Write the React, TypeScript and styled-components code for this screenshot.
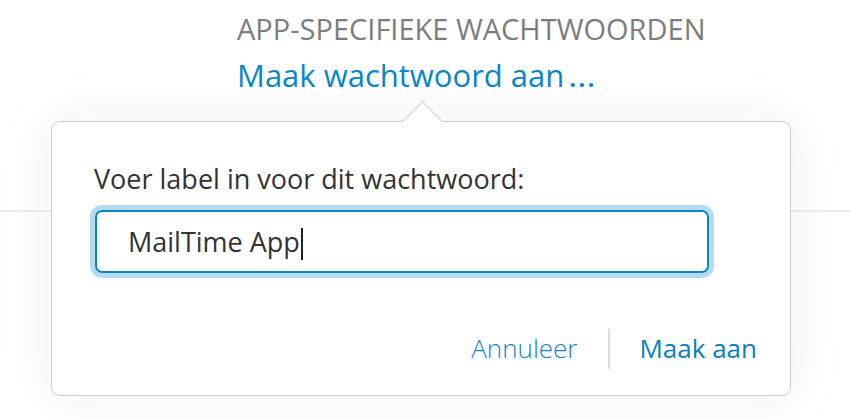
import React from "react";
import styled, { createGlobalStyle } from "styled-components";

const GlobalStyle = createGlobalStyle`
  body {
    margin: 0;
    background: #ffffff;
    font-family: "Open Sans", "Noto Sans", sans-serif;
  }
`;

const Page = styled.div`
  position: relative;
  width: 850px;
  height: 418px;
  overflow: hidden;
  background: #ffffff;
`;

const Header = styled.header`
  display: flex;
  flex-direction: column;
  align-items: flex-start;
  padding: 12px 0 0 237px;
`;

const Title = styled.h2`
  margin: 0;
  font-size: 29px;
  font-weight: 400;
  line-height: 34px;
  color: #7d7d7d;
`;

const CreateLink = styled.a`
  margin-top: 9px;
  font-size: 31px;
  line-height: 40px;
  color: #0a86cc;
  text-decoration: none;
`;

const Dots = styled.span`
  display: inline-block;
  margin-left: 4px;
  transform: scaleX(1.15);
  transform-origin: left center;
`;

const Section = styled.div`
  margin-top: 115px;
  border-top: 2px solid #ececec;
`;

const Popover = styled.div`
  position: absolute;
  left: 51px;
  top: 121px;
  width: 740px;
  height: 275px;
  box-sizing: border-box;
  background: #ffffff;
  border: 1.5px solid #cdcdcd;
  border-radius: 9px;
  box-shadow: 0 0 60px 12px rgba(0, 0, 0, 0.035);
  display: flex;
  flex-direction: column;
  padding: 40px 33px 0 42px;

  &::before {
    content: "";
    position: absolute;
    left: 356px;
    top: -15px;
    width: 28px;
    height: 28px;
    background: #ffffff;
    border-top: 1.5px solid #cdcdcd;
    border-left: 1.5px solid #cdcdcd;
    transform: rotate(45deg);
  }
`;

const Label = styled.label`
  font-size: 27px;
  line-height: 34px;
  color: #333333;
`;

const Field = styled.div`
  margin-top: 14px;
  margin-left: 1px;
  width: 614px;
  height: 63px;
  box-sizing: border-box;
  border: 2px solid #0a84c8;
  border-radius: 7px;
  box-shadow: 0 0 0 5px #b4dcf1;
  display: flex;
  align-items: center;
  padding-left: 31px;
  font-size: 27px;
  color: #333333;
`;

const Caret = styled.span`
  display: inline-block;
  width: 2px;
  height: 32px;
  margin: 4px 0 0 1px;
  background: #222222;
`;

const Actions = styled.div`
  margin-top: auto;
  margin-bottom: 26px;
  display: flex;
  justify-content: flex-end;
  align-items: center;
`;

const Action = styled.button<{ primary?: boolean }>`
  border: none;
  background: none;
  padding: 0;
  margin-top: -3px;
  font-family: inherit;
  font-size: 26px;
  font-weight: ${({ primary }) => (primary ? 400 : 300)};
  color: ${({ primary }) => (primary ? "#0a7fc4" : "#1585cb")};
  cursor: pointer;
`;

const Separator = styled.span`
  width: 2px;
  height: 40px;
  margin: 0 29px 0 31px;
  background: #dddddd;
`;

export default function App() {
  return (
    <Page>
      <GlobalStyle />
      <Header>
        <Title>APP-SPECIFIEKE WACHTWOORDEN</Title>
        <CreateLink href="#">
          Maak wachtwoord aan<Dots>…</Dots>
        </CreateLink>
      </Header>
      <Section />
      <Popover>
        <Label>Voer label in voor dit wachtwoord:</Label>
        <Field>
          MailTime App
          <Caret />
        </Field>
        <Actions>
          <Action>Annuleer</Action>
          <Separator />
          <Action primary>Maak aan</Action>
        </Actions>
      </Popover>
    </Page>
  );
}
